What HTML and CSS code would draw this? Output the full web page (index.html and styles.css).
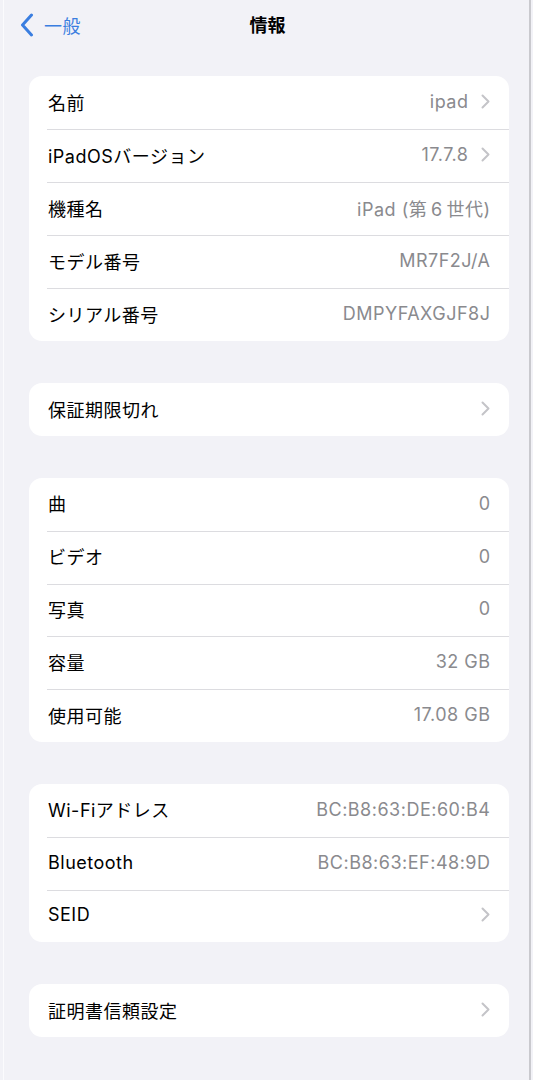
FILE: index.html
```html
<!DOCTYPE html>
<html lang="ja">
<head>
<meta charset="utf-8">
<link rel="stylesheet" href="styles.css">
</head>
<body>
<div class="page">
  <header class="nav">
    <div class="back">
      <svg class="back-icon" width="14" height="24" viewBox="0 0 14 24"><path d="M11.5 2 L2.5 12 L11.5 22" fill="none" stroke="#3a7ee0" stroke-width="3" stroke-linecap="round" stroke-linejoin="round"/></svg>
      <span class="back-label">一般</span>
    </div>
    <div class="title">情報</div>
  </header>

  <section class="card">
    <div class="row"><span class="label">名前</span><span class="value">ipad</span><svg class="chev" viewBox="0 0 9 15"><path d="M1.5 1.5 L7.5 7.5 L1.5 13.5"/></svg></div>
    <div class="row"><span class="label">iPadOSバージョン</span><span class="value">17.7.8</span><svg class="chev" viewBox="0 0 9 15"><path d="M1.5 1.5 L7.5 7.5 L1.5 13.5"/></svg></div>
    <div class="row"><span class="label">機種名</span><span class="value">iPad (第&#8201;6&#8201;世代)</span></div>
    <div class="row"><span class="label">モデル番号</span><span class="value">MR7F2J/A</span></div>
    <div class="row"><span class="label">シリアル番号</span><span class="value">DMPYFAXGJF8J</span></div>
  </section>

  <section class="card">
    <div class="row"><span class="label">保証期限切れ</span><span class="value"></span><svg class="chev" viewBox="0 0 9 15"><path d="M1.5 1.5 L7.5 7.5 L1.5 13.5"/></svg></div>
  </section>

  <section class="card">
    <div class="row"><span class="label">曲</span><span class="value">0</span></div>
    <div class="row"><span class="label">ビデオ</span><span class="value">0</span></div>
    <div class="row"><span class="label">写真</span><span class="value">0</span></div>
    <div class="row"><span class="label">容量</span><span class="value">32 GB</span></div>
    <div class="row"><span class="label">使用可能</span><span class="value">17.08 GB</span></div>
  </section>

  <section class="card">
    <div class="row"><span class="label">Wi-Fiアドレス</span><span class="value">BC:B8:63:DE:60:B4</span></div>
    <div class="row"><span class="label">Bluetooth</span><span class="value">BC:B8:63:EF:48:9D</span></div>
    <div class="row"><span class="label">SEID</span><span class="value"></span><svg class="chev" viewBox="0 0 9 15"><path d="M1.5 1.5 L7.5 7.5 L1.5 13.5"/></svg></div>
  </section>

  <section class="card">
    <div class="row"><span class="label">証明書信頼設定</span><span class="value"></span><svg class="chev" viewBox="0 0 9 15"><path d="M1.5 1.5 L7.5 7.5 L1.5 13.5"/></svg></div>
  </section>
</div>
</body>
</html>
```

FILE: styles.css
```css
* { box-sizing: border-box; }
html, body {
  margin: 0;
  padding: 0;
  background: #f2f2f7;
}
body {
  font-family: Inter, "Noto Sans CJK JP", "Noto Sans", sans-serif;
  color: #000;
  width: 533px;
  height: 1080px;
  overflow: hidden;
}
.page {
  height: 1080px;
  margin-left: 3px;
  width: 528px;
  border-left: 1px solid #fbfbfd;
  border-right: 2px solid #c9c9ce;
}
.nav {
  position: relative;
  height: 76px;
}
.back {
  display: flex;
  align-items: center;
  gap: 10px;
  padding-left: 16px;
  padding-top: 13px;
  height: 37px;
}
.back-icon { display: block; }
.back-label {
  font-size: 18px;
  color: #3a7ee0;
  font-weight: 400;
  letter-spacing: 0.5px;
}
.title {
  position: absolute;
  top: 11px;
  left: 0;
  right: 0;
  text-align: center;
  font-size: 18px;
  font-weight: 700;
  padding-left: 2px;
}
.card {
  background: #fff;
  border-radius: 13px;
  margin: 0 20px 42px 25px;
  overflow: hidden;
}
.row {
  display: flex;
  align-items: center;
  height: 53px;
  padding: 0 19px 2px 19px;
  position: relative;
  font-size: 18px;
  letter-spacing: 0.5px;
}
.card:nth-of-type(n+3) .row { height: 52.8px; }
.row + .row::before {
  content: "";
  position: absolute;
  top: 0;
  left: 18px;
  right: 0;
  height: 1px;
  background: #dcdce0;
}
.label {
  flex: 1;
}
.value {
  color: #8a8a8e;
  margin-right: -0.5px;
}
.chev {
  width: 9px;
  height: 15px;
  margin-left: 13px;
  display: block;
}
.chev path {
  fill: none;
  stroke: #c4c4c8;
  stroke-width: 2;
  stroke-linecap: round;
  stroke-linejoin: round;
}
```
